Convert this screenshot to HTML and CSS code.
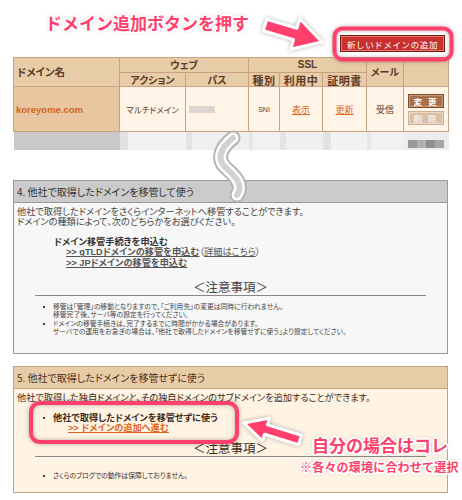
FILE: index.html
```html
<!DOCTYPE html>
<html lang="ja">
<head>
<meta charset="utf-8">
<title>ドメイン</title>
<link rel="stylesheet" href="styles.css">
</head>
<body>
<div class="page">
  <div class="top">
    <div class="caption">ドメイン追加ボタンを押す</div>
    <button class="add-btn">新しいドメインの追加</button>
  </div>

  <table class="domains">
    <colgroup>
      <col class="c-name"><col class="c-act"><col class="c-path"><col class="c-kind"><col class="c-use"><col class="c-cert"><col class="c-mail"><col class="c-ops">
    </colgroup>
    <thead>
      <tr class="h1">
        <th rowspan="2" class="name-h">ドメイン名</th>
        <th colspan="2">ウェブ</th>
        <th colspan="3" class="ssl">SSL</th>
        <th rowspan="2">メール</th>
        <th rowspan="2"></th>
      </tr>
      <tr class="h2">
        <th>アクション</th><th>パス</th><th class="kanji">種別</th><th class="kanji">利用中</th><th class="kanji">証明書</th>
      </tr>
    </thead>
    <tbody>
      <tr class="row">
        <td class="name">koreyome.com</td>
        <td class="small">マルチドメイン</td>
        <td><span class="blur"></span></td>
        <td class="tiny">SNI</td>
        <td><a class="lnk">表示</a></td>
        <td><a class="lnk">更新</a></td>
        <td class="mail">受信</td>
        <td class="ops"><span class="op">変 更</span><span class="op off">削 除</span></td>
      </tr>
      <tr class="ghost">
        <td class="g-name"></td><td class="g-a"></td><td class="g-b"></td><td class="g-c"></td><td class="g-b"></td><td class="g-a"></td><td class="g-c"></td><td class="g-ops"><span class="pix"></span></td>
      </tr>
    </tbody>
  </table>

  <section class="panel p4">
    <h2 class="panel-h">4. 他社で取得したドメインを移管して使う</h2>
    <div class="panel-b">
      <p class="lead">他社で取得したドメインをさくらインターネットへ移管することができます。<br>ドメインの種類によって、次のどちらかをお選びください。</p>
      <div class="choice">
        <div class="choice-t">ドメイン移管手続きを申込む</div>
        <div class="choice-l"><a class="glink">&gt;&gt; gTLDドメインの移管を申込む</a>（<a class="plain">詳細はこちら</a>）</div>
        <div class="choice-l"><a class="glink">&gt;&gt; JPドメインの移管を申込む</a></div>
      </div>
      <div class="notice">＜注意事項＞</div>
      <ul class="notes">
        <li>移管は「管理」の移動となりますので、「ご利用先」の変更は同時に行われません。<br>移管完了後、サーバ等の設定を行ってください。</li>
        <li>ドメインの移管手続きは、完了するまでに時間がかかる場合があります。<br>サーバでの運用をお急ぎの場合は、「他社で取得したドメインを移管せずに使う」より設定してください。</li>
      </ul>
    </div>
  </section>

  <section class="panel p5">
    <h2 class="panel-h">5. 他社で取得したドメインを移管せずに使う</h2>
    <div class="panel-b">
      <p class="lead">他社で取得した独自ドメインと、その独自ドメインのサブドメインを追加することができます。</p>
      <ul class="pick">
        <li><b>他社で取得したドメインを移管せずに使う</b><br><a class="olink">&gt;&gt; ドメインの追加へ進む</a></li>
      </ul>
      <div class="notice">＜注意事項＞</div>
      <ul class="notes">
        <li>さくらのブログでの動作は保障しておりません。</li>
      </ul>
    </div>
  </section>

  <svg class="overlay" width="462" height="500" viewBox="0 0 462 500">
    <g class="squiggle">
      <path d="M233 138 C219 149 217 160 226 168 C235 176 244 185 237 195" stroke="#b5b5b5" stroke-width="15" fill="none" stroke-linecap="round"/>
      <path d="M233 138 C219 149 217 160 226 168 C235 176 244 185 237 195" stroke="#ffffff" stroke-width="11" fill="none" stroke-linecap="round"/>
      <path d="M233 138 C219 149 217 160 226 168 C235 176 244 185 237 195" stroke="#d2d2d2" stroke-width="6" fill="none" stroke-linecap="round"/>
    </g>
    <g class="pink">
      <polygon points="266.7,19.3 296.9,28.3 299.8,18.7 322,42 290.6,49.3 293.5,39.7 263.3,30.7" fill="#ff3f6c" stroke="#fff" stroke-width="3" stroke-linejoin="round"/>
      <rect x="334.5" y="28.5" width="117" height="31" rx="8" fill="none" stroke="#ff3f6c" stroke-width="4"/>
      <rect x="31" y="403" width="206" height="39" rx="9" fill="none" stroke="#ff3f6c" stroke-width="4"/>
      <polygon points="301.5,435.2 267.5,424.7 269.5,418 244,423 262.5,441 264.5,434.3 298.5,444.8" fill="#ff3f6c" stroke="#fff" stroke-width="3" stroke-linejoin="round"/>
    </g>
  </svg>

  <div class="note-cap">
    <div class="cap-big">自分の場合はコレ</div>
    <div class="cap-small">※各々の環境に合わせて選択</div>
  </div>
</div>
</body>
</html>
```

FILE: styles.css
```css
* { box-sizing: border-box; margin: 0; padding: 0; }

body {
  margin: 0;
  background: #fff;
  font-family: "Noto Sans CJK JP", "Noto Sans", sans-serif;
  font-feature-settings: "palt";
  color: #333;
}

.page {
  position: relative;
  width: 462px;
  height: 500px;
  overflow: hidden;
}

/* top area */
.top {
  height: 57px;
  display: flex;
  justify-content: space-between;
  align-items: flex-start;
  padding: 0 17px 0 45px;
}

.caption,
.cap-big,
.cap-small {
  font-weight: 700;
  color: #ff3f6c;
  text-shadow:
    2px 0 0 #fff, -2px 0 0 #fff, 0 2px 0 #fff, 0 -2px 0 #fff,
    1.5px 1.5px 0 #fff, -1.5px -1.5px 0 #fff, 1.5px -1.5px 0 #fff, -1.5px 1.5px 0 #fff,
    0 0 5px rgba(0, 0, 0, 0.35);
}

.caption {
  margin-top: 12px;
  font-size: 17px;
  line-height: 22px;
  font-feature-settings: normal;
}

.add-btn {
  margin-top: 35px;
  width: 105px;
  height: 17px;
  background: #c8302c;
  border: 1px solid #7a1814;
  box-shadow: inset 0 0 0 1px #e67b76;
  color: #fff;
  font-family: "Noto Sans CJK JP", sans-serif;
  font-size: 8.5px;
  line-height: 14px;
  letter-spacing: 0.6px;
  font-feature-settings: normal;
}

/* table */
.domains {
  margin-left: 13px;
  width: 435px;
  border-collapse: collapse;
  table-layout: fixed;
  color: #5b3b28;
}

.c-name { width: 106px; }
.c-act { width: 66px; }
.c-path { width: 63px; }
.c-kind { width: 31px; }
.c-use { width: 43px; }
.c-cert { width: 44px; }
.c-mail { width: 37px; }
.c-ops { width: 45px; }

.domains th,
.domains td {
  border: 1px solid #c8a282;
  padding: 0;
  text-align: center;
  vertical-align: middle;
}

.domains th {
  background: #e8cba7;
  font-size: 10px;
  font-weight: 700;
  line-height: 12px;
}

.domains .h1 th { height: 15px; }
.domains .h2 th { height: 14px; }

.domains th.name-h {
  text-align: left;
  padding-left: 3px;
  font-size: 10.5px;
}

.domains th.ssl { font-family: "Liberation Sans", sans-serif; font-size: 10px; }
.domains th.kanji { font-size: 11px; letter-spacing: 0.5px; }

.domains .row td {
  height: 45px;
  background: #fff4e6;
  font-size: 8.5px;
}

.domains td.name {
  background: #e7c6a0;
  text-align: left;
  padding-left: 2px;
  color: #d4651c;
  font-weight: 700;
  font-size: 9.5px;
  font-family: "Liberation Sans", sans-serif;
}

.domains td.small { font-size: 8.5px; }
.domains td.tiny { font-family: "Liberation Sans", sans-serif; font-size: 7px; }
.domains td.mail { font-size: 9px; }

.lnk {
  color: #e0641e;
  text-decoration: underline;
  font-size: 9px;
}

.blur {
  display: inline-block;
  width: 26px;
  height: 7px;
  margin-left: -30px;
  background: #ddd3cf;
}

.op {
  display: block;
  width: 36px;
  height: 14px;
  margin: 0 auto;
  background: #a8714a;
  border: 1px solid #7c4e2e;
  box-shadow: inset 0 0 0 1px #c99a78;
  color: #fff;
  font-size: 8.5px;
  line-height: 12px;
  letter-spacing: 2px;
  font-weight: 700;
}

.op.off {
  margin-top: 3px;
  background: #dcc1a8;
  border-color: #cdb096;
  box-shadow: inset 0 0 0 1px #ead6c4;
  color: #f6ece2;
}

.domains .ghost td {
  height: 18px;
  border: none;
  background: #ededed;
}

.domains .ghost td.g-name { background: #c9c9c9; }
.domains .ghost td.g-a { background: #f2f2f2; box-shadow: inset 8px 0 0 #e2e2e2; }
.domains .ghost td.g-b { background: #efefef; box-shadow: inset 6px 0 0 #e4e4e4; }
.domains .ghost td.g-c { background: #f1f1f1; box-shadow: inset 4px 0 0 #e6e6e6; }
.domains .ghost td.g-ops { background: #ececec; vertical-align: bottom; text-align: left; }

.pix {
  display: block;
  width: 36px;
  height: 8px;
  margin: 0 0 2px 4px;
  background: linear-gradient(90deg, #9a9a9a 0 25%, #b0b0b0 25% 50%, #8e8e8e 50% 75%, #a6a6a6 75%);
}

/* panels */
.panel {
  margin-left: 13px;
  width: 435px;
  border: 1px solid #999;
}

.panel-h {
  height: 22px;
  padding-left: 3px;
  font-size: 10px;
  font-weight: normal;
  line-height: 21px;
  border-bottom: 1px solid #999;
}

.p4 {
  margin-top: 30px;
  background: #f7f7f7;
  color: #444;
}

.p4 .panel-h { background: #cbcbcb; color: #333; }

.p5 {
  margin-top: 12px;
  border-color: #c4a381;
  background: #fff3e4;
  color: #3a2a20;
}

.p5 .panel-h {
  background: #e8cca8;
  border-bottom-color: #c4a381;
  color: #4a3020;
}

.panel-b { padding: 4px 3px 16px 3px; }
.p5 .panel-b { padding: 4px 3px 11px 3px; }

/* tight text blocks: Latin-metric primary font keeps line boxes compact */
.lead,
.choice,
.pick,
.notes {
  font-family: "Liberation Sans", "Noto Sans CJK JP", sans-serif;
}

.lead {
  font-size: 9.2px;
  line-height: 10.6px;
}

.choice {
  margin: 9px 0 0 37px;
  font-size: 9.2px;
  line-height: 10.6px;
}

.choice-t { font-weight: 700; color: #333; }

.choice-l {
  padding-left: 12px;
  color: #555;
}

.glink {
  font-weight: 700;
  text-decoration: underline;
  color: #555;
}

.plain { text-decoration: underline; }

.notice {
  margin: 11px 18px 0 18px;
  border-bottom: 1px solid #888;
  text-align: center;
  font-size: 12.5px;
  line-height: 16px;
}

.notes {
  list-style: none;
  margin: 7px 0 0 26px;
  font-size: 6.8px;
  line-height: 7.9px;
}

.notes li {
  position: relative;
  padding-left: 10px;
  margin-bottom: 1px;
}

.notes li::before,
.pick li::before {
  content: "";
  position: absolute;
  left: 0;
  top: 3px;
  width: 2px;
  height: 2px;
  background: #444;
}

.p5 .notes { margin-top: 15px; }

.pick {
  list-style: none;
  margin: 9px 0 0 26px;
  font-size: 9.2px;
  line-height: 10.6px;
}

.pick li {
  position: relative;
  padding-left: 10px;
}

.pick li::before { top: 4px; }

.pick b { color: #3a2a20; }

.olink {
  display: inline-block;
  margin-left: 15px;
  color: #e0641e;
  text-decoration: underline;
  font-weight: 700;
}

.p5 .notice { margin-top: 6px; }

/* overlays */
.overlay {
  position: absolute;
  left: 0;
  top: 0;
  pointer-events: none;
}

.overlay .pink { filter: drop-shadow(0 0 2px rgba(0, 0, 0, 0.3)); }

.note-cap {
  position: absolute;
  left: 300px;
  top: 434px;
  width: 162px;
}

.cap-big {
  margin-left: 12px;
  font-size: 17px;
  line-height: 22px;
  font-feature-settings: normal;
}

.cap-small {
  margin-top: 4px;
  font-size: 12px;
  line-height: 14px;
  font-feature-settings: normal;
  letter-spacing: 0.2px;
}
```
